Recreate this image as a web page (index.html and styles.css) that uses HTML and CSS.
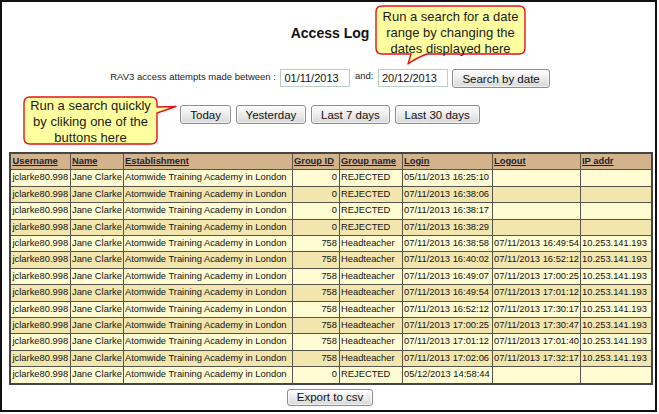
FILE: index.html
```html
<!DOCTYPE html>
<html>
<head lang="en">
    <meta charset="UTF-8">
    <title>Access Log</title>
    <link rel="stylesheet" href="styles.css">
</head>
<body>
<div class="frame">
    <h1 class="title">Access Log</h1>

    <form class="search-row">
        <span class="lbl">RAV3 access attempts made between :</span>
        <input class="date" type="text" value="01/11/2013">
        <span class="lbl lbl-and">and:</span>
        <input class="date" type="text" value="20/12/2013">
        <button class="btn" type="button">Search by date</button>
    </form>

    <div class="quick-row">
        <button class="btn" type="button">Today</button>
        <button class="btn" type="button">Yesterday</button>
        <button class="btn" type="button">Last 7 days</button>
        <button class="btn" type="button">Last 30 days</button>
    </div>

    <table class="log">
        <colgroup>
            <col class="c-user"><col class="c-name"><col class="c-est"><col class="c-gid">
            <col class="c-gname"><col class="c-login"><col class="c-logout"><col class="c-ip">
        </colgroup>
        <thead>
        <tr>
            <th><a href="#">Username</a></th>
            <th><a href="#">Name</a></th>
            <th><a href="#">Establishment</a></th>
            <th><a href="#">Group ID</a></th>
            <th><a href="#">Group name</a></th>
            <th><a href="#">Login</a></th>
            <th><a href="#">Logout</a></th>
            <th><a href="#">IP addr</a></th>
        </tr>
        </thead>
        <tbody>
        <tr><td>jclarke80.998</td><td>Jane Clarke</td><td>Atomwide Training Academy in London</td><td class="num">0</td><td>REJECTED</td><td>05/11/2013 16:25:10</td><td></td><td></td></tr>
        <tr><td>jclarke80.998</td><td>Jane Clarke</td><td>Atomwide Training Academy in London</td><td class="num">0</td><td>REJECTED</td><td>07/11/2013 16:38:06</td><td></td><td></td></tr>
        <tr><td>jclarke80.998</td><td>Jane Clarke</td><td>Atomwide Training Academy in London</td><td class="num">0</td><td>REJECTED</td><td>07/11/2013 16:38:17</td><td></td><td></td></tr>
        <tr><td>jclarke80.998</td><td>Jane Clarke</td><td>Atomwide Training Academy in London</td><td class="num">0</td><td>REJECTED</td><td>07/11/2013 16:38:29</td><td></td><td></td></tr>
        <tr><td>jclarke80.998</td><td>Jane Clarke</td><td>Atomwide Training Academy in London</td><td class="num">758</td><td>Headteacher</td><td>07/11/2013 16:38:58</td><td>07/11/2013 16:49:54</td><td>10.253.141.193</td></tr>
        <tr><td>jclarke80.998</td><td>Jane Clarke</td><td>Atomwide Training Academy in London</td><td class="num">758</td><td>Headteacher</td><td>07/11/2013 16:40:02</td><td>07/11/2013 16:52:12</td><td>10.253.141.193</td></tr>
        <tr><td>jclarke80.998</td><td>Jane Clarke</td><td>Atomwide Training Academy in London</td><td class="num">758</td><td>Headteacher</td><td>07/11/2013 16:49:07</td><td>07/11/2013 17:00:25</td><td>10.253.141.193</td></tr>
        <tr><td>jclarke80.998</td><td>Jane Clarke</td><td>Atomwide Training Academy in London</td><td class="num">758</td><td>Headteacher</td><td>07/11/2013 16:49:54</td><td>07/11/2013 17:01:12</td><td>10.253.141.193</td></tr>
        <tr><td>jclarke80.998</td><td>Jane Clarke</td><td>Atomwide Training Academy in London</td><td class="num">758</td><td>Headteacher</td><td>07/11/2013 16:52:12</td><td>07/11/2013 17:30:17</td><td>10.253.141.193</td></tr>
        <tr><td>jclarke80.998</td><td>Jane Clarke</td><td>Atomwide Training Academy in London</td><td class="num">758</td><td>Headteacher</td><td>07/11/2013 17:00:25</td><td>07/11/2013 17:30:47</td><td>10.253.141.193</td></tr>
        <tr><td>jclarke80.998</td><td>Jane Clarke</td><td>Atomwide Training Academy in London</td><td class="num">758</td><td>Headteacher</td><td>07/11/2013 17:01:12</td><td>07/11/2013 17:01:40</td><td>10.253.141.193</td></tr>
        <tr><td>jclarke80.998</td><td>Jane Clarke</td><td>Atomwide Training Academy in London</td><td class="num">758</td><td>Headteacher</td><td>07/11/2013 17:02:06</td><td>07/11/2013 17:32:17</td><td>10.253.141.193</td></tr>
        <tr><td>jclarke80.998</td><td>Jane Clarke</td><td>Atomwide Training Academy in London</td><td class="num">0</td><td>REJECTED</td><td>05/12/2013 14:58:44</td><td></td><td></td></tr>
        </tbody>
    </table>

    <div class="export-row">
        <button class="btn btn-export" type="button">Export to csv</button>
    </div>

    <!-- annotation callouts laid over the page -->
    <div class="callout callout-dates">
        <svg width="160" height="64" viewBox="0 0 160 64">
            <path d="M12,3 H149 Q155,3 155,9 V45 Q155,51 149,51 H57 Q46,55 38,61 L41,51 H12 Q6,51 6,45 V9 Q6,3 12,3 Z"/>
        </svg>
        <p>Run a search for a date<br>range by changing the<br>dates displayed here</p>
    </div>
    <div class="callout callout-quick">
        <svg width="160" height="54" viewBox="0 0 160 54">
            <path d="M10,3 H131 Q137,3 137,9 V13 L156,12.5 L137,19 V44 Q137,50 131,50 H10 Q4,50 4,44 V9 Q4,3 10,3 Z"/>
        </svg>
        <p>Run a search quickly<br>by cliking one of the<br>buttons here</p>
    </div>
</div>
</body>
</html>
```

FILE: styles.css
```css
*{
    box-sizing: border-box;
}
body{
    margin:0;
    background:#fff;
    color:#111;
    font-family:"Liberation Sans", Arial, sans-serif;
}
.frame{
    position:relative;
    width:657px;
    height:412px;
    padding-left:3px;
    border:2px solid #111;
}
.title{
    margin:23px 0 0;
    font-size:14px;
    line-height:16px;
    font-weight:bold;
    text-align:center;
}

/* date range search */
.search-row{
    display:flex;
    justify-content:center;
    align-items:flex-start;
    gap:4.5px;
    height:19px;
    margin:28px 0 0;
}
.lbl{
    margin-top:1.5px;
    font-size:9.5px;
    line-height:11px;
    color:#222;
}
.lbl-and{
    margin-top:0.5px;
}
.date{
    width:70px;
    height:18px;
    margin:0;
    padding:0 3px;
    border:1px solid #b9cfc6;
    font-family:inherit;
    font-size:11px;
    color:#111;
}
.btn{
    height:19px;
    margin:0;
    padding:0 9px;
    border:1px solid #8c8d8d;
    border-radius:3px;
    background:linear-gradient(#fefefe, #ececec 50%, #d8d8d8);
    box-shadow:inset 0 0 0 1px rgba(255,255,255,.6);
    font-family:inherit;
    font-size:11.5px;
    color:#111;
}
.quick-row{
    display:flex;
    justify-content:center;
    gap:4.7px;
    margin-top:17px;
}

/* log table */
.log{
    width:642px;
    margin:28px 0 0 4px;
    table-layout:fixed;
    border-collapse:collapse;
    border:2px solid #454545;
    font-size:9.35px;
}
.c-user{ width:60px; }
.c-name{ width:53px; }
.c-est{ width:169px; }
.c-gid{ width:47px; }
.c-gname{ width:63px; }
.c-login{ width:90px; }
.c-logout{ width:88px; }
.c-ip{ width:72px; }
.log th,
.log td{
    padding:1px 1px 1px 1.5px;
    border:1px solid #55554a;
    line-height:13.4px;
    text-align:left;
    white-space:nowrap;
    overflow:hidden;
}
.log th{
    background:#d3b38c;
    font-weight:bold;
}
.log th a{
    color:#1e1e30;
    text-decoration:underline;
}
.log tbody tr:nth-child(odd) td{
    background:#fffbd2;
}
.log tbody tr:nth-child(even) td{
    background:#f2e6ae;
}
.log td.num{
    text-align:right;
    padding-right:1.5px;
}
.export-row{
    display:flex;
    justify-content:center;
    margin-top:4px;
}
.btn-export{
    height:17px;
}

/* callouts */
.callout{
    position:absolute;
}
.callout svg{
    position:absolute;
    left:0;
    top:0;
}
.callout path{
    fill:#ffffa0;
    stroke:#e5121b;
    stroke-width:1.4;
    stroke-linejoin:round;
}
.callout p{
    position:relative;
    margin:0;
    font-size:13px;
    line-height:16px;
    text-align:center;
    color:#1a1a1a;
}
.callout-dates{
    left:368px;
    top:1px;
    width:160px;
    height:64px;
}
.callout-dates p{
    width:149px;
    margin:5.5px 0 0 6px;
}
.callout-quick{
    left:18px;
    top:92px;
    width:160px;
    height:54px;
}
.callout-quick p{
    width:133px;
    margin:4px 0 0 4px;
}
```
